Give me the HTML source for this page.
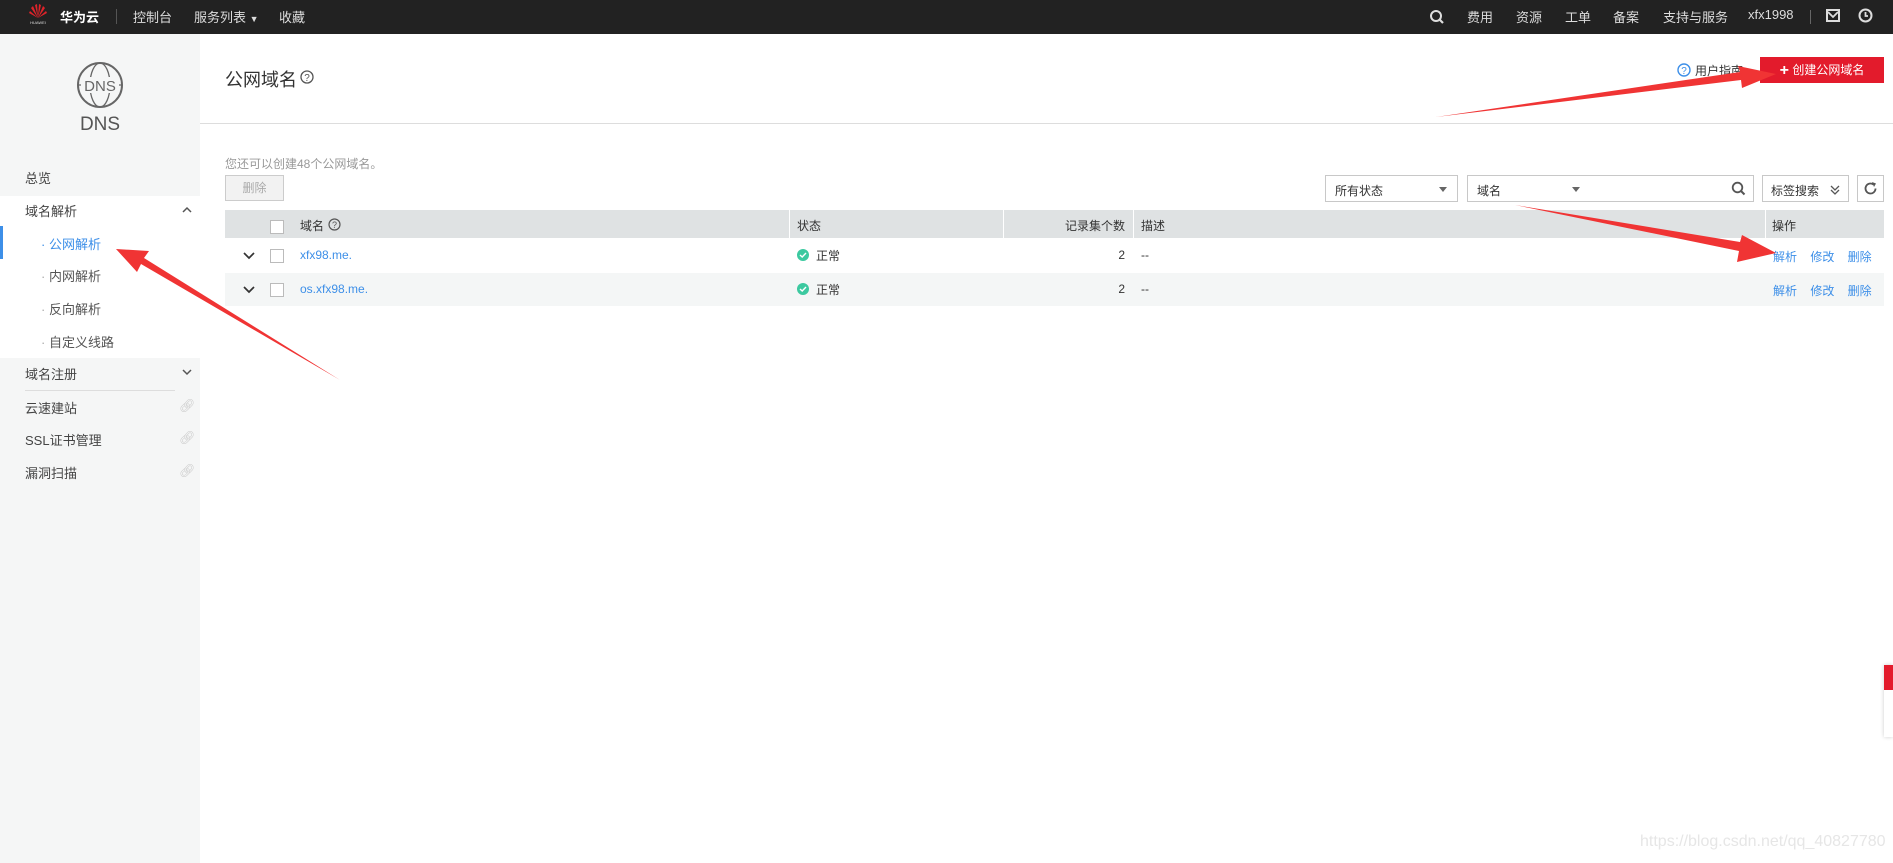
<!DOCTYPE html>
<html><head><meta charset="utf-8"><style>
*{margin:0;padding:0;box-sizing:border-box}
body{width:1893px;height:863px;position:relative;overflow:hidden;background:#fff;font-family:"Liberation Sans","Noto Sans CJK SC",sans-serif;font-size:12px;color:#333}
.a{position:absolute;white-space:nowrap}
.top{position:absolute;left:0;top:0;width:1893px;height:34px;background:#222}
.top .a{color:#ddd;font-size:13px;top:7px}
.side{position:absolute;left:0;top:34px;width:200px;height:829px;background:#f5f6f6}
.sm{position:absolute;left:0;width:200px;font-size:13px;color:#444}
.link{color:#3d8fe8}
.box{position:absolute;border:1px solid #c8c8c8;background:#fff}
.caret{position:absolute;width:0;height:0;border-left:4px solid transparent;border-right:4px solid transparent;border-top:5px solid #666}
.cb{position:absolute;width:14px;height:14px;border:1px solid #bbb;background:#fff}
</style></head><body>
<div class="top">
  <svg class="a" style="left:26px;top:2px" width="24" height="24" viewBox="0 0 24 24">
    <g fill="#e0232a"><path d="M12 16 L9 3 L11 2 Z"/><path d="M12 16 L15 3 L13 2 Z"/><path d="M12 16 L5 6 L7 4 Z"/><path d="M12 16 L19 6 L17 4 Z"/><path d="M12 16 L3 11 L4 9 Z"/><path d="M12 16 L21 11 L20 9 Z"/></g>
    <text x="12" y="22" font-size="4" fill="#ddd" text-anchor="middle" font-family="Liberation Sans">HUAWEI</text>
  </svg>
  <div class="a" style="left:60px;color:#fff;font-weight:bold">华为云</div>
  <div class="a" style="left:116px;top:9px;width:1px;height:15px;background:#555"></div>
  <div class="a" style="left:133px">控制台</div>
  <div class="a" style="left:194px">服务列表 <span style="font-size:9px">▼</span></div>
  <div class="a" style="left:279px">收藏</div>
  <svg class="a" style="left:1429px;top:9px" width="16" height="16" viewBox="0 0 16 16"><circle cx="7" cy="7" r="5" stroke="#ddd" stroke-width="2" fill="none"/><path d="M11 11 L14 14" stroke="#ddd" stroke-width="2.2"/></svg>
  <div class="a" style="left:1467px">费用</div>
  <div class="a" style="left:1516px">资源</div>
  <div class="a" style="left:1565px">工单</div>
  <div class="a" style="left:1613px">备案</div>
  <div class="a" style="left:1663px">支持与服务</div>
  <div class="a" style="left:1748px">xfx1998</div>
  <div class="a" style="left:1810px;top:10px;width:1px;height:14px;background:#666"></div>
  <svg class="a" style="left:1826px;top:9px" width="14" height="13" viewBox="0 0 14 13"><rect x="1" y="1" width="12" height="11" fill="none" stroke="#ddd" stroke-width="2"/><path d="M2 3 L7 8 L12 3" stroke="#ddd" stroke-width="1.8" fill="none"/></svg>
  <svg class="a" style="left:1858px;top:8px" width="15" height="15" viewBox="0 0 15 15"><circle cx="7.5" cy="7.5" r="6" fill="none" stroke="#ddd" stroke-width="2"/><path d="M7.5 4 V8 H10" stroke="#ddd" stroke-width="1.8" fill="none"/></svg>
</div>

<div class="side">
  <svg class="a" style="left:76px;top:27px" width="48" height="48" viewBox="0 0 48 48"><circle cx="24" cy="24" r="22" fill="none" stroke="#666" stroke-width="2"/><ellipse cx="24" cy="24" rx="10" ry="22" fill="none" stroke="#666" stroke-width="1.3"/><path d="M2 24 H46" stroke="#666" stroke-width="1.2"/><rect x="5" y="16" width="38" height="16" fill="#f5f6f6"/><text x="24" y="30" font-size="15" fill="#666" text-anchor="middle" font-family="Liberation Sans">DNS</text></svg>
  <div class="a" style="left:0;width:200px;text-align:center;top:80px;font-size:19px;color:#555">DNS</div>
  <div class="sm" style="top:162px;height:162px;background:#fff"></div>
  <div class="a" style="left:0;top:192px;width:3px;height:33px;background:#3d8fe8"></div>
  <div class="a" style="left:25px;top:134px;font-size:13px;color:#444">总览</div>
  <div class="a" style="left:25px;top:167px;font-size:13px;color:#444">域名解析</div>
  <svg class="a" style="left:182px;top:172px" width="10" height="8" viewBox="0 0 10 8"><path d="M1 6 L5 2 L9 6" stroke="#555" stroke-width="1.5" fill="none"/></svg>
  <div class="a" style="left:41px;top:200px;font-size:13px;color:#3d8fe8">· 公网解析</div>
  <div class="a" style="left:41px;top:232px;font-size:13px;color:#555"><span style="color:#aaa">·</span> 内网解析</div>
  <div class="a" style="left:41px;top:265px;font-size:13px;color:#555"><span style="color:#aaa">·</span> 反向解析</div>
  <div class="a" style="left:41px;top:298px;font-size:13px;color:#555"><span style="color:#aaa">·</span> 自定义线路</div>
  <div class="a" style="left:25px;top:330px;font-size:13px;color:#444">域名注册</div>
  <svg class="a" style="left:182px;top:334px" width="10" height="8" viewBox="0 0 10 8"><path d="M1 2 L5 6 L9 2" stroke="#555" stroke-width="1.5" fill="none"/></svg>
  <div class="a" style="left:25px;top:356px;width:150px;height:1px;background:#ddd"></div>
  <div class="a" style="left:25px;top:364px;font-size:13px;color:#444">云速建站</div>
  <div class="a" style="left:25px;top:396px;font-size:13px;color:#444">SSL证书管理</div>
  <div class="a" style="left:25px;top:429px;font-size:13px;color:#444">漏洞扫描</div>
  <div class="a" style="left:179px;top:364px;color:#ccc;font-size:13px">🔗︎</div>
  <div class="a" style="left:179px;top:396px;color:#ccc;font-size:13px">🔗︎</div>
  <div class="a" style="left:179px;top:429px;color:#ccc;font-size:13px">🔗︎</div>
</div>

<div class="a" style="left:225px;top:66px;font-size:18px;color:#333">公网域名</div>
<svg class="a" style="left:300px;top:70px" width="14" height="14" viewBox="0 0 14 14"><circle cx="7" cy="7" r="6" fill="none" stroke="#555" stroke-width="1.3"/><text x="7" y="11" font-size="10" text-anchor="middle" fill="#555" font-family="Liberation Sans">?</text></svg>
<svg class="a" style="left:1677px;top:63px" width="14" height="14" viewBox="0 0 14 14"><circle cx="7" cy="7" r="6" fill="none" stroke="#3d8fe8" stroke-width="1.4"/><text x="7" y="11" font-size="10" text-anchor="middle" fill="#3d8fe8" font-family="Liberation Sans">?</text></svg>
<div class="a" style="left:1695px;top:62px;color:#333">用户指南</div>
<div class="a" style="left:1760px;top:57px;width:124px;height:26px;background:#e31b2c;color:#fff;text-align:center;line-height:26px"><b style="font-size:16px;vertical-align:-1px">+</b> 创建公网域名</div>
<div class="a" style="left:200px;top:123px;width:1693px;height:1px;background:#ddd"></div>

<div class="a" style="left:225px;top:155px;color:#999">您还可以创建48个公网域名。</div>
<div class="a" style="left:225px;top:175px;width:59px;height:26px;background:#f2f2f2;border:1px solid #ccc;color:#aaa;text-align:center;line-height:24px">删除</div>
<div class="box" style="left:1325px;top:175px;width:133px;height:27px"><span class="a" style="left:9px;top:6px">所有状态</span><div class="caret" style="left:113px;top:11px"></div></div>
<div class="box" style="left:1467px;top:175px;width:287px;height:27px"><span class="a" style="left:9px;top:6px">域名</span><div class="caret" style="left:104px;top:11px"></div>
<svg class="a" style="left:263px;top:5px" width="15" height="15" viewBox="0 0 15 15"><circle cx="6.5" cy="6.5" r="4.8" fill="none" stroke="#555" stroke-width="1.8"/><path d="M10 10 L13.5 13.5" stroke="#555" stroke-width="2"/></svg></div>
<div class="box" style="left:1762px;top:175px;width:87px;height:27px"><span class="a" style="left:8px;top:6px">标签搜索</span>
<svg class="a" style="left:66px;top:8px" width="12" height="12" viewBox="0 0 12 12"><path d="M2 2 L6 6 L10 2 M2 6 L6 10 L10 6" stroke="#555" stroke-width="1.3" fill="none"/></svg></div>
<div class="box" style="left:1857px;top:175px;width:27px;height:27px">
<svg class="a" style="left:5px;top:5px" width="15" height="15" viewBox="0 0 15 15"><path d="M12.5 7.5 A5 5 0 1 1 10.5 3.5" fill="none" stroke="#555" stroke-width="1.8"/><path d="M9 1 L13 2.5 L11 6 Z" fill="#555"/></svg></div>

<div class="a" style="left:225px;top:210px;width:1659px;height:28px;background:#dfe2e3"></div>
<div class="a" style="left:789px;top:210px;width:1px;height:28px;background:#fff"></div>
<div class="a" style="left:1003px;top:210px;width:1px;height:28px;background:#fff"></div>
<div class="a" style="left:1133px;top:210px;width:1px;height:28px;background:#fff"></div>
<div class="a" style="left:1765px;top:210px;width:1px;height:28px;background:#fff"></div>
<div class="cb" style="left:270px;top:220px"></div>
<div class="a" style="left:300px;top:217px">域名</div>
<svg class="a" style="left:328px;top:218px" width="13" height="13" viewBox="0 0 13 13"><circle cx="6.5" cy="6.5" r="5.5" fill="none" stroke="#555" stroke-width="1.2"/><text x="6.5" y="10" font-size="9" text-anchor="middle" fill="#555" font-family="Liberation Sans">?</text></svg>
<div class="a" style="left:797px;top:217px">状态</div>
<div class="a" style="left:1005px;width:120px;text-align:right;top:217px">记录集个数</div>
<div class="a" style="left:1141px;top:217px">描述</div>
<div class="a" style="left:1772px;top:217px">操作</div>

<div class="a" style="left:225px;top:273px;width:1659px;height:33px;background:#f4f6f6"></div>
<svg class="a" style="left:243px;top:251px" width="12" height="9" viewBox="0 0 12 9"><path d="M1 2 L6 7 L11 2" stroke="#333" stroke-width="1.7" fill="none"/></svg>
<svg class="a" style="left:243px;top:285px" width="12" height="9" viewBox="0 0 12 9"><path d="M1 2 L6 7 L11 2" stroke="#333" stroke-width="1.7" fill="none"/></svg>
<div class="cb" style="left:270px;top:249px"></div>
<div class="cb" style="left:270px;top:283px"></div>
<div class="a link" style="left:300px;top:248px">xfx98.me.</div>
<div class="a link" style="left:300px;top:282px">os.xfx98.me.</div>
<svg class="a" style="left:797px;top:249px" width="12" height="12" viewBox="0 0 12 12"><circle cx="6" cy="6" r="6" fill="#3cc9a0"/><path d="M3 6 L5.2 8 L9 4" stroke="#fff" stroke-width="1.4" fill="none"/></svg>
<svg class="a" style="left:797px;top:283px" width="12" height="12" viewBox="0 0 12 12"><circle cx="6" cy="6" r="6" fill="#3cc9a0"/><path d="M3 6 L5.2 8 L9 4" stroke="#fff" stroke-width="1.4" fill="none"/></svg>
<div class="a" style="left:816px;top:247px">正常</div>
<div class="a" style="left:816px;top:281px">正常</div>
<div class="a" style="left:1005px;width:120px;text-align:right;top:248px">2</div>
<div class="a" style="left:1005px;width:120px;text-align:right;top:282px">2</div>
<div class="a" style="left:1141px;top:248px">--</div>
<div class="a" style="left:1141px;top:282px">--</div>
<div class="a link" style="left:1773px;top:248px">解析&nbsp;&nbsp;&nbsp;&nbsp;修改&nbsp;&nbsp;&nbsp;&nbsp;删除</div>
<div class="a link" style="left:1773px;top:282px">解析&nbsp;&nbsp;&nbsp;&nbsp;修改&nbsp;&nbsp;&nbsp;&nbsp;删除</div>

<div class="a" style="left:1884px;top:665px;width:9px;height:72px;background:#fff;box-shadow:0 0 4px rgba(0,0,0,.2)"></div>
<div class="a" style="left:1884px;top:665px;width:9px;height:25px;background:#e31b2c"></div>
<div class="a" style="left:1640px;top:833px;font-size:16px;color:#e6e6e6">https://blog.csdn.net/qq_40827780</div>

<svg class="a" style="left:0;top:0" width="1893" height="863">
  <g fill="#f03434">
    <path d="M1436 117 L1740 72 L1738 66 L1776 74 L1742 88 L1741 80 Z"/>
    <path d="M1515 205 L1740 242 L1742 235 L1776 253 L1737 262 L1739 251 Z"/>
    <path d="M340 380 L141 264 L137 272 L116 249 L149 251 L144 258 Z"/>
  </g>
</svg>
</body></html>
